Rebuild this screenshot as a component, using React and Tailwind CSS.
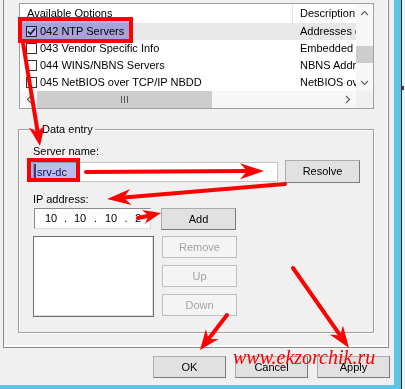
import React from "react";

function arrowParts(x1, y1, x2, y2, L = 20, W = 8) {
  const dx = x2 - x1;
  const dy = y2 - y1;
  const len = Math.hypot(dx, dy);
  const ux = dx / len;
  const uy = dy / len;
  const px = -uy;
  const py = ux;
  const bx = x2 - ux * L;
  const by = y2 - uy * L;
  const nx = x2 - ux * L * 0.7;
  const ny = y2 - uy * L * 0.7;
  const pts = [
    [x2, y2],
    [bx + px * W, by + py * W],
    [nx, ny],
    [bx - px * W, by - py * W],
  ]
    .map((p) => p.join(","))
    .join(" ");
  return { line: [x1, y1, nx, ny], pts };
}

function Arrow({ from, to, L, W, sw = 4 }) {
  const a = arrowParts(from[0], from[1], to[0], to[1], L, W);
  return (
    <g>
      <line
        x1={a.line[0]}
        y1={a.line[1]}
        x2={a.line[2]}
        y2={a.line[3]}
        stroke="#ff0000"
        strokeWidth={sw}
        strokeLinecap="round"
      />
      <polygon points={a.pts} fill="#ff0000" />
    </g>
  );
}

function Btn({ children, disabled, className = "" }) {
  return (
    <div
      className={
        "flex items-center justify-center border " +
        (disabled
          ? "border-[#bfbfbf] bg-[#f4f4f4] text-[#a3a3a3] "
          : "border-[#adadad] border-r-[#7a7a7a] border-b-[#7a7a7a] bg-[#e1e1e1] text-black ") +
        className
      }
    >
      {children}
    </div>
  );
}

function Check({ checked }) {
  return (
    <div className="w-[11px] h-[11px] border border-[#333] bg-white flex items-center justify-center">
      {checked && (
        <svg width="9" height="9" viewBox="0 0 9 9">
          <path d="M1 4.5 L3.5 7 L8 1.5" stroke="#222" strokeWidth="1.6" fill="none" />
        </svg>
      )}
    </div>
  );
}

function Row({ checked, name, desc, selected }) {
  return (
    <div className={"flex h-[17px] items-center " + (selected ? "bg-[#e8e8e8]" : "bg-white")}>
      <div className="w-[273px] flex items-center pl-[6px] shrink-0">
        <Check checked={checked} />
        <span className="ml-[3px] whitespace-nowrap">{name}</span>
      </div>
      <div className="pl-[7px] whitespace-nowrap overflow-hidden">{desc}</div>
    </div>
  );
}

export default function App() {
  return (
    <div
      className="w-[405px] h-[389px] relative overflow-hidden flex bg-[#f0f0f0] text-[11px] leading-[13px] text-black"
      style={{ fontFamily: '"Liberation Sans", Arial, sans-serif' }}
    >
      <div className="w-[401px] h-[389px] flex flex-col bg-[#5ec5e8] shrink-0">
        <div className="w-[394px] h-[385px] bg-[#f0f0f0] flex flex-col">
          {/* tab page */}
          <div className="ml-[3px] w-[386px] h-[348px] border-x border-b border-[#898989] bg-[#f0f0f0] shadow-[inset_-1px_-2px_0_#ffffff] pl-[15px] pt-[3px] flex flex-col">
            {/* list view */}
            <div className="w-[355px] h-[106px] border border-[#a0a0a0] bg-white flex flex-col">
              <div className="flex h-[87px]">
                <div className="w-[336px] overflow-hidden flex flex-col">
                  <div className="h-[19px] flex items-center bg-white">
                    <div className="w-[273px] h-full pl-[7px] flex items-center border-r border-[#e5e5e5] shrink-0">
                      Available Options
                    </div>
                    <div className="pl-[7px] whitespace-nowrap">Description</div>
                  </div>
                  <Row checked selected name="042 NTP Servers" desc="Addresses of NTP" />
                  <Row name="043 Vendor Specific Info" desc="Embedded vendor" />
                  <Row name="044 WINS/NBNS Servers" desc="NBNS Addresses" />
                  <Row name="045 NetBIOS over TCP/IP NBDD" desc="NetBIOS over" />
                </div>
                <div className="w-[17px] flex flex-col bg-[#f7f7f7]">
                  <div className="h-[17px] flex items-center justify-center">
                    <svg width="9" height="6" viewBox="0 0 9 6">
                      <path d="M1 5 L4.5 1.5 L8 5" stroke="#606060" strokeWidth="1.2" fill="none" />
                    </svg>
                  </div>
                  <div className="h-[25px]" />
                  <div className="h-[17px] bg-[#cdcdcd]" />
                  <div className="flex-1" />
                  <div className="h-[17px] flex items-center justify-center">
                    <svg width="9" height="6" viewBox="0 0 9 6">
                      <path d="M1 1 L4.5 4.5 L8 1" stroke="#606060" strokeWidth="1.2" fill="none" />
                    </svg>
                  </div>
                </div>
              </div>
              <div className="flex h-[17px]">
                <div className="w-[336px] flex bg-[#f7f7f7]">
                  <div className="w-[17px] flex items-center justify-center">
                    <svg width="6" height="9" viewBox="0 0 6 9">
                      <path d="M5 1 L1.5 4.5 L5 8" stroke="#606060" strokeWidth="1.2" fill="none" />
                    </svg>
                  </div>
                  <div className="w-[175px] bg-[#cdcdcd] flex items-center justify-center">
                    <svg width="7" height="7" viewBox="0 0 7 7">
                      <path d="M0.5 0 V7 M3.5 0 V7 M6.5 0 V7" stroke="#555" strokeWidth="1" />
                    </svg>
                  </div>
                  <div className="flex-1" />
                  <div className="w-[17px] flex items-center justify-center">
                    <svg width="6" height="9" viewBox="0 0 6 9">
                      <path d="M1 1 L4.5 4.5 L1 8" stroke="#606060" strokeWidth="1.2" fill="none" />
                    </svg>
                  </div>
                </div>
                <div className="w-[17px] bg-[#f0f0f0]" />
              </div>
            </div>

            {/* Data entry group */}
            <fieldset className="-ml-[1px] mt-[14px] w-[356px] h-[210px] border border-[#a0a0a0] shadow-[inset_1px_1px_0_#ffffff,1px_1px_0_#ffffff] pl-[14px] pr-[13px]">
              <legend className="ml-[7px] px-[2px] leading-[13px]">Data entry</legend>
              <div className="mt-[9px] leading-[13px]">Server name:</div>
              <div className="mt-[2px] flex items-start">
                <div className="mt-[2px] w-[245px] h-[20px] bg-white border border-[#c6c6c6] flex items-center">
                  <div className="h-[16px] w-[2px] bg-[#4a4a8a]" />
                  <span className="ml-[1px] text-[#10104a]">srv-dc</span>
                </div>
                <Btn className="ml-[7px] w-[75px] h-[23px]">Resolve</Btn>
              </div>
              <div className="mt-[10px] leading-[13px]">IP address:</div>
              <div className="mt-[2px] flex items-start">
                <div className="ml-[1px] w-[117px] h-[21px] bg-white border border-[#8a8a8a] border-b-[#dcdcdc] border-r-[#dcdcdc] flex items-center pl-[10px]">
                  <span className="w-[12px]">10</span>
                  <span className="w-[17px] text-center">.</span>
                  <span className="w-[12px]">10</span>
                  <span className="w-[19px] text-center">.</span>
                  <span className="w-[12px]">10</span>
                  <span className="w-[18px] text-center">.</span>
                  <span>2</span>
                </div>
                <Btn className="ml-[10px] w-[75px] h-[22px]">Add</Btn>
              </div>
              <div className="mt-[6px] flex">
                <div className="w-[121px] h-[81px] bg-white border border-[#6d6d6d] shadow-[inset_-1px_-1px_0_#e0e0e0]" />
                <div className="ml-[8px] flex flex-col gap-[7px]">
                  <Btn disabled className="w-[75px] h-[22px]">Remove</Btn>
                  <Btn disabled className="w-[75px] h-[22px]">Up</Btn>
                  <Btn disabled className="w-[75px] h-[22px]">Down</Btn>
                </div>
              </div>
            </fieldset>
          </div>

          {/* bottom buttons */}
          <div className="mt-[8px] ml-[153px] flex gap-[9px]">
            <Btn className="w-[73px] h-[22px]">OK</Btn>
            <Btn className="w-[73px] h-[22px]">Cancel</Btn>
            <Btn className="w-[73px] h-[22px]">Apply</Btn>
          </div>
        </div>
      </div>
      <div className="w-[1px] h-full bg-[#2e2e2e]" />
      <div className="flex-1 h-full bg-[#f0f0f0] flex flex-col">
        <div className="mt-[86px] h-[4px] w-[2px] bg-[#7a1f2f]" />
      </div>

      {/* highlighter + red boxes overlays */}
      <div className="absolute left-[18px] top-[17px] w-[115px] h-[26px] border-[4px] border-[#ff0000]">
        <div className="w-full h-full bg-[#b4b4f0] mix-blend-multiply" />
      </div>
      <div className="absolute left-[27px] top-[158px] w-[53px] h-[24px] border-[4px] border-[#ff0000]">
        <div className="w-full h-full bg-[#bcbcf4] mix-blend-multiply" />
      </div>

      {/* arrows */}
      <svg className="absolute left-0 top-0 pointer-events-none" width="405" height="389" viewBox="0 0 405 389">
        <Arrow from={[23, 43]} to={[40, 146]} L={20} W={8} />
        <Arrow from={[86, 172]} to={[264, 171]} L={24} W={8} />
        <Arrow from={[285, 184]} to={[107, 199]} L={24} W={8} />
        <Arrow from={[138, 218]} to={[161, 213]} L={18} W={7} />
        <Arrow from={[227, 315]} to={[200, 350]} L={20} W={8} />
        <Arrow from={[293, 268]} to={[349, 348]} L={22} W={8} />
      </svg>

      {/* watermark */}
      <div
        className="absolute left-[233px] top-[346px] text-[20px] leading-[22px] italic text-[#ff0000] whitespace-nowrap"
        style={{ fontFamily: '"Liberation Serif", "Times New Roman", serif' }}
      >
        www.ekzorchik.ru
      </div>
    </div>
  );
}
